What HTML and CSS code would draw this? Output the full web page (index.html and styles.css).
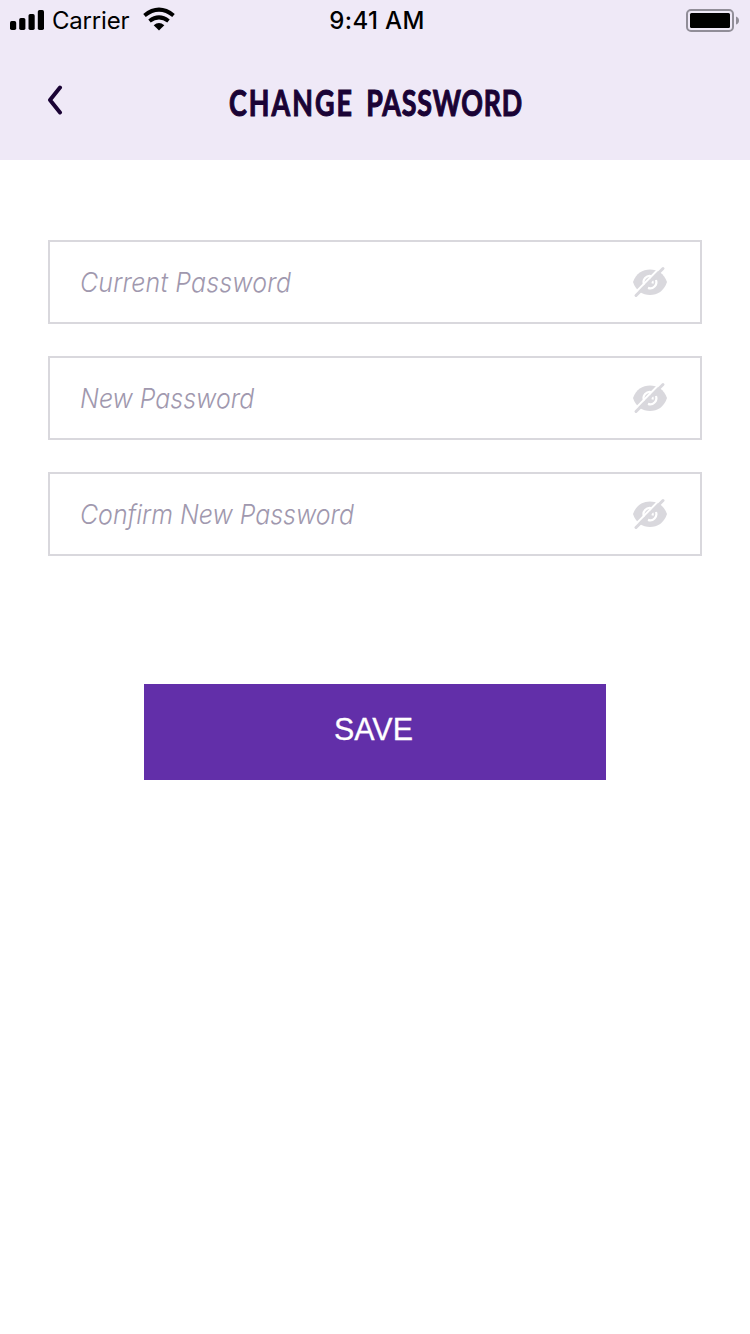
FILE: index.html
```html
<!DOCTYPE html>
<html lang="en">
<head>
<meta charset="utf-8">
<title>Change Password</title>
<link rel="stylesheet" href="styles.css">
</head>
<body>
<svg class="defs" width="0" height="0">
  <symbol id="eye-off" viewBox="0 0 36 32">
    <path class="eye-shape" d="M1 16C4 7.500 10.500 3.500 18 3.500S32 7.500 35 16C32 25 25.500 29 18 29S4 25 1 16Z"/>
    <path class="eye-ring" d="M12.300 19A6.200 6.200 0 0 1 20 10.300M24 14A6.200 6.200 0 0 1 16 21.900M18 13.500A3 3 0 0 1 20.500 17.500"/>
    <path class="eye-gap" d="M1.500 28.500L28.500 1"/>
    <path class="eye-slash" d="M4 29.500L31 2.500"/>
  </symbol>
</svg>
<header class="header">
  <div class="status">
    <div class="status-left">
      <svg class="signal" viewBox="0 0 34 20"><rect y="11" width="6.200" height="9" rx="1.700"/><rect x="9.200" y="8" width="6.200" height="12" rx="1.700"/><rect x="18.500" y="4" width="6.200" height="16" rx="1.700"/><rect x="27.800" width="6.200" height="20" rx="1.700"/></svg>
      <span class="carrier">Carrier</span>
      <svg class="wifi" viewBox="0 0 32 23"><path class="wifi-arc" d="M1.500 7.500Q16 -4.200 30.500 7.500M6.500 13Q16 5.800 25.500 13"/><path d="M10.700 17.200Q16 12.800 21.300 17.200L16 22.400Z"/></svg>
    </div>
    <span class="time">9:41 AM</span>
    <svg class="battery" viewBox="0 0 54 24"><rect class="battery-case" x="1" y="1" width="46" height="21" rx="4"/><rect x="4" y="4" width="40" height="15" rx="1.500"/><path class="battery-tip" d="M50 7.500Q53 8.500 53 11.500T50 15.500Z"/></svg>
  </div>
  <div class="nav">
    <svg class="back" viewBox="0 0 18 30"><path d="M13 2.500L3 15L13 27.500"/></svg>
    <h1 class="title"><span class="title-lead">CHANGE</span> PASSWORD</h1>
  </div>
</header>
<main class="form">
  <div class="field"><span class="hint hint-current">Current Password</span><svg class="eye"><use href="#eye-off"/></svg></div>
  <div class="field"><span class="hint">New Password</span><svg class="eye"><use href="#eye-off"/></svg></div>
  <div class="field"><span class="hint">Confirm New Password</span><svg class="eye"><use href="#eye-off"/></svg></div>
  <button class="save" type="button"><span class="save-label">SAVE</span></button>
</main>
</body>
</html>
```

FILE: styles.css
```css
* { box-sizing: border-box; }
body { margin: 0; background: #fff; font-family: Inter, sans-serif; }
.defs { display: block; }
.header { height: 160px; background: #efe9f7; }
.status { display: grid; grid-template-columns: 1fr auto 1fr; align-items: center; height: 40px; padding: 0 10px; color: #000; }
.status-left { display: flex; align-items: center; }
.signal { width: 34px; height: 20px; }
.carrier { width: 77px; margin-left: 8px; padding-top: 1px; font-size: 24px; line-height: 39px; letter-spacing: -0.2px; white-space: nowrap; }
.wifi { width: 32px; height: 23px; margin: 0 0 2px 14px; overflow: visible; }
.wifi-arc { fill: none; stroke: #000; stroke-width: 4; }
.time { padding: 1px 0 0 4px; font-size: 24px; line-height: 39px; font-weight: 550; letter-spacing: 0.4px; white-space: nowrap; }
.battery { width: 54px; height: 24px; margin-top: 1px; justify-self: end; }
.battery-case { fill: none; stroke: #918e98; stroke-width: 2; }
.battery-tip { fill: #918e98; }
.nav { display: grid; grid-template-columns: 18px 1fr 18px; align-items: center; height: 120px; padding: 0 45px 0 47px; }
.back { width: 18px; height: 30px; }
.back path { fill: none; stroke: #1a0335; stroke-width: 4; stroke-linecap: round; stroke-linejoin: round; }
.title { margin: 0; padding: 4px 0 0; text-align: center; color: #1a0335; font: 700 36px/40px Lato, sans-serif; letter-spacing: 1.100px; word-spacing: 6.500px; -webkit-text-stroke: 1.100px #1a0335; transform: scaleX(.745); white-space: nowrap; }
.title-lead { letter-spacing: 2.800px; }
.form { display: flex; flex-direction: column; gap: 32px; padding: 80px 48px 0; }
.field { display: flex; align-items: center; justify-content: space-between; width: 654px; height: 84px; padding: 0 32px 0 30px; border: 2px solid #d9d8dd; }
.hint { padding-top: 2px; font-size: 27px; line-height: 40px; font-style: italic; font-weight: 350; color: #a098ae; white-space: nowrap; transform: scaleX(.922); transform-origin: left; }
.hint-current { letter-spacing: 0.200px; }
.eye { width: 36px; height: 32px; }
.eye-shape { fill: #d9d8dd; }
.eye-ring { fill: none; stroke: #fff; stroke-width: 2.200; }
.eye-gap { stroke: #fff; stroke-width: 2; }
.eye-slash { stroke: #d9d8dd; stroke-width: 3; stroke-linecap: round; }
.save { align-self: center; width: 462px; height: 96px; margin-top: 96px; padding: 0 4px 6px 0; border: 0; background: #622fa9; color: #fff; font: 32px "Liberation Sans", sans-serif; }
.save-label { display: inline-block; transform: scaleX(.95); -webkit-text-stroke: 0.300px #fff; }
```
